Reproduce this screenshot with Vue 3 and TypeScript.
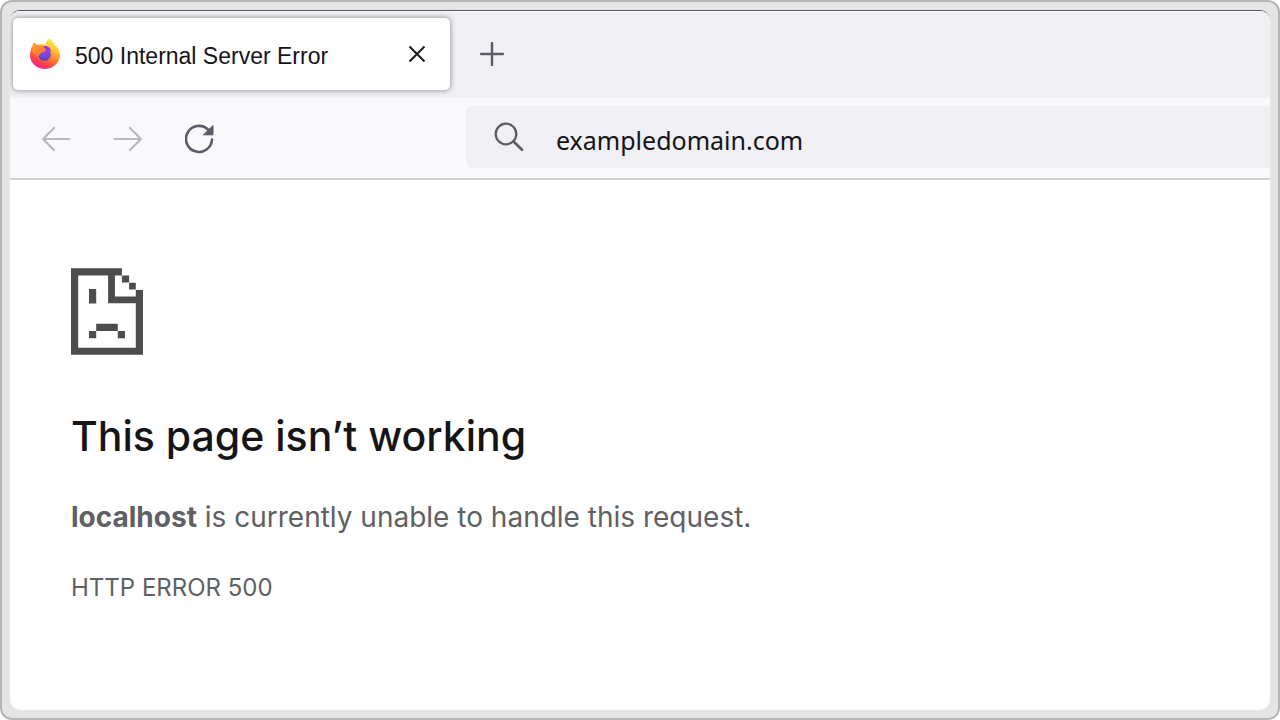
<script setup lang="ts">
import { ref } from 'vue'

const tabTitle = ref('500 Internal Server Error')
const address = ref('exampledomain.com')
const host = ref('localhost')
const errorCode = ref('HTTP ERROR 500')
</script>

<template>
  <div class="frame">
    <div class="browser">
      <header class="tab-strip">
        <div class="tab">
          <svg class="favicon" viewBox="0 0 32 32" aria-hidden="true">
            <defs>
              <linearGradient id="flame" x1="0.8" y1="0.05" x2="0.3" y2="1">
                <stop offset="0" stop-color="#fff04a" />
                <stop offset="0.3" stop-color="#ffc22f" />
                <stop offset="0.55" stop-color="#ff7a2c" />
                <stop offset="0.8" stop-color="#ff3d50" />
                <stop offset="1" stop-color="#f3219a" />
              </linearGradient>
              <linearGradient id="fox" x1="0" y1="0" x2="1" y2="1">
                <stop offset="0" stop-color="#ffa52e" />
                <stop offset="1" stop-color="#ff6a30" />
              </linearGradient>
              <radialGradient id="globe" cx="0.6" cy="0.25" r="0.8">
                <stop offset="0" stop-color="#a63be8" />
                <stop offset="0.6" stop-color="#6f48dd" />
                <stop offset="1" stop-color="#4a45b5" />
              </radialGradient>
            </defs>
            <path fill="url(#flame)" d="M20.300 0.500c3.700 2.300 4.800 4.500 5.700 6.800 3.100 2 5 5.200 5 9.500 0 8-6.800 14.200-15 14.200S1 25 1 17.200c0-4 1.200-7.300 3.300-9.700L5 4.500l3.300 2.500C11 5.700 14 6 16.800 7c-.2-3 1.200-5.100 3.500-6.500Z" />
            <circle cx="15.500" cy="16.500" r="6.300" fill="url(#globe)" />
            <path fill="#9a35dc" d="M13 9c4.500-2.500 8.800.3 9.300 5.200-1.700-2-4-2.800-6.300-2.200Z" />
            <path fill="url(#fox)" d="M1.800 11 5 4.500l3.300 3c2.500-.7 5-.2 6.700 1.800l2.200 2.700c-.7 1.600-2.700 2-4.200 2.500-1.200 1.300-3 1.700-3.600 4.200-2.400-.2-5-2.700-7.600-7.700Z" />
          </svg>
          <span class="tab-title">{{ tabTitle }}</span>
          <button class="icon-button close" type="button" aria-label="Close tab">
            <svg viewBox="0 0 18 18" width="18" height="18">
              <path d="M1.500 1.500l15 15M16.500 1.500l-15 15" fill="none" stroke="#1c1b22" stroke-width="2" />
            </svg>
          </button>
        </div>
        <button class="icon-button add" type="button" aria-label="New tab">
          <svg viewBox="0 0 24 24" width="24" height="24">
            <path d="M12 1v22M1 12h22" fill="none" stroke="#5b5b66" stroke-width="2.400" stroke-linecap="round" />
          </svg>
        </button>
      </header>

      <nav class="toolbar" aria-label="Navigation">
        <div class="nav-buttons">
          <button class="icon-button" type="button" aria-label="Back">
            <svg viewBox="0 0 30 30" width="30" height="30">
              <path d="M28 15H2M13 4 2 15l11 11" fill="none" stroke="#b9b9be" stroke-width="2.200" stroke-linecap="round" stroke-linejoin="round" />
            </svg>
          </button>
          <button class="icon-button" type="button" aria-label="Forward">
            <svg viewBox="0 0 30 30" width="30" height="30">
              <path d="M1.500 15H28M17 4l11 11-11 11" fill="none" stroke="#b9b9be" stroke-width="2.200" stroke-linecap="round" stroke-linejoin="round" />
            </svg>
          </button>
          <button class="icon-button" type="button" aria-label="Reload">
            <svg viewBox="0 0 30 30" width="30" height="30">
              <path d="M27 15.500A13 13 0 1 1 23 5.500" fill="none" stroke="#5b5b66" stroke-width="2.600" stroke-linecap="round" />
              <path d="M28 1.500v9.300H18.500Z" fill="#5b5b66" stroke="#5b5b66" stroke-width="1" stroke-linejoin="round" />
            </svg>
          </button>
        </div>
        <label class="address">
          <svg viewBox="0 0 30 30" width="30" height="30" aria-hidden="true">
            <circle cx="12" cy="12" r="10.300" fill="none" stroke="#5b5b66" stroke-width="2.300" />
            <path d="M19.500 19.500 28 27.800" fill="none" stroke="#5b5b66" stroke-width="2.600" stroke-linecap="round" />
          </svg>
          <input v-model="address" type="text" aria-label="Address" spellcheck="false" />
        </label>
      </nav>

      <main class="page">
        <svg class="sad-page" viewBox="0 0 10 12" shape-rendering="geometricPrecision" aria-hidden="true">
          <path fill="#4d4d4d" fill-rule="evenodd" d="M0 0H7.070V1H8.070V2H9V3H10V12H0ZM1 1V11.050H9V4.850H5.150V1ZM6.100 1V3.930H9V2.950H8.070V1.970H7.070V1Z" />
          <path fill="#4d4d4d" d="M2.500 2.880h1v2h-1ZM3.500 7.700h3v1h-3ZM2.500 8.700h1v1h-1ZM6.500 8.700h1v1h-1Z" />
        </svg>
        <h1>This page isn’t working</h1>
        <p class="message"><strong>{{ host }}</strong> is currently unable to handle this request.</p>
        <p class="code">{{ errorCode }}</p>
      </main>
    </div>
  </div>
</template>

<style>
body {
  margin: 0;
  background: #fff;
}
</style>

<style scoped>
.frame {
  box-sizing: border-box;
  display: flex;
  min-height: 100vh;
  padding: 8px;
  border: 2px solid #b5b5b5;
  border-radius: 12px;
  background: #e5e5e5;
}

.browser {
  flex: 1;
  display: flex;
  flex-direction: column;
  overflow: hidden;
  border-top: 1px solid #555;
  border-radius: 10px;
  background: #fff;
}

.tab-strip {
  display: flex;
  align-items: center;
  gap: 30px;
  padding: 6px 3px 8px;
  border-top: 1px solid #fafafc;
  background: #f0eff4;
}

.tab {
  box-sizing: border-box;
  display: flex;
  align-items: center;
  width: 437px;
  height: 72px;
  padding: 0 24px 0 16px;
  border-radius: 5px;
  background: #fff;
  box-shadow: 0 0 5px 1px #a0a0a4;
}

.favicon {
  width: 32px;
  height: 32px;
}

.tab-title {
  flex: 1;
  margin-left: 14px;
  padding-top: 4px;
  font: 23px/32px "Liberation Sans", Arial, sans-serif;
  color: #15141a;
  white-space: nowrap;
}

.icon-button {
  display: flex;
  padding: 0;
  border: 0;
  background: none;
  cursor: pointer;
}

.toolbar {
  display: flex;
  align-items: center;
  padding: 8px 0 10px 31px;
  border-bottom: 2px solid #cfcfd2;
  background: #f9f9fb;
}

.nav-buttons {
  display: flex;
  gap: 42px;
  width: 425px;
  padding-top: 3px;
}

.address {
  flex: 1;
  display: flex;
  align-items: center;
  gap: 32px;
  height: 62px;
  padding: 0 28px;
  border-radius: 6px 0 0 6px;
  background: #f0eff4;
}

.address input {
  flex: 1;
  min-width: 0;
  padding: 6px 0 0;
  border: 0;
  outline: 0;
  background: none;
  font: 25px/36px "Noto Sans", "Open Sans", sans-serif;
  color: #15141a;
}

.page {
  flex: 1;
  padding: 88px 61px 60px;
  font-family: Inter, "Liberation Sans", sans-serif;
  color: #5f6063;
}

.sad-page {
  display: block;
  width: 72px;
  height: 87px;
}

h1 {
  margin: 53px 0 0;
  font-size: 41px;
  font-weight: 500;
  line-height: 56px;
  color: #151518;
}

p {
  margin: 0;
}

.message {
  margin-top: 35px;
  font-size: 28px;
  line-height: 36px;
}

.code {
  margin-top: 37px;
  font-size: 24px;
  line-height: 32px;
}
</style>
